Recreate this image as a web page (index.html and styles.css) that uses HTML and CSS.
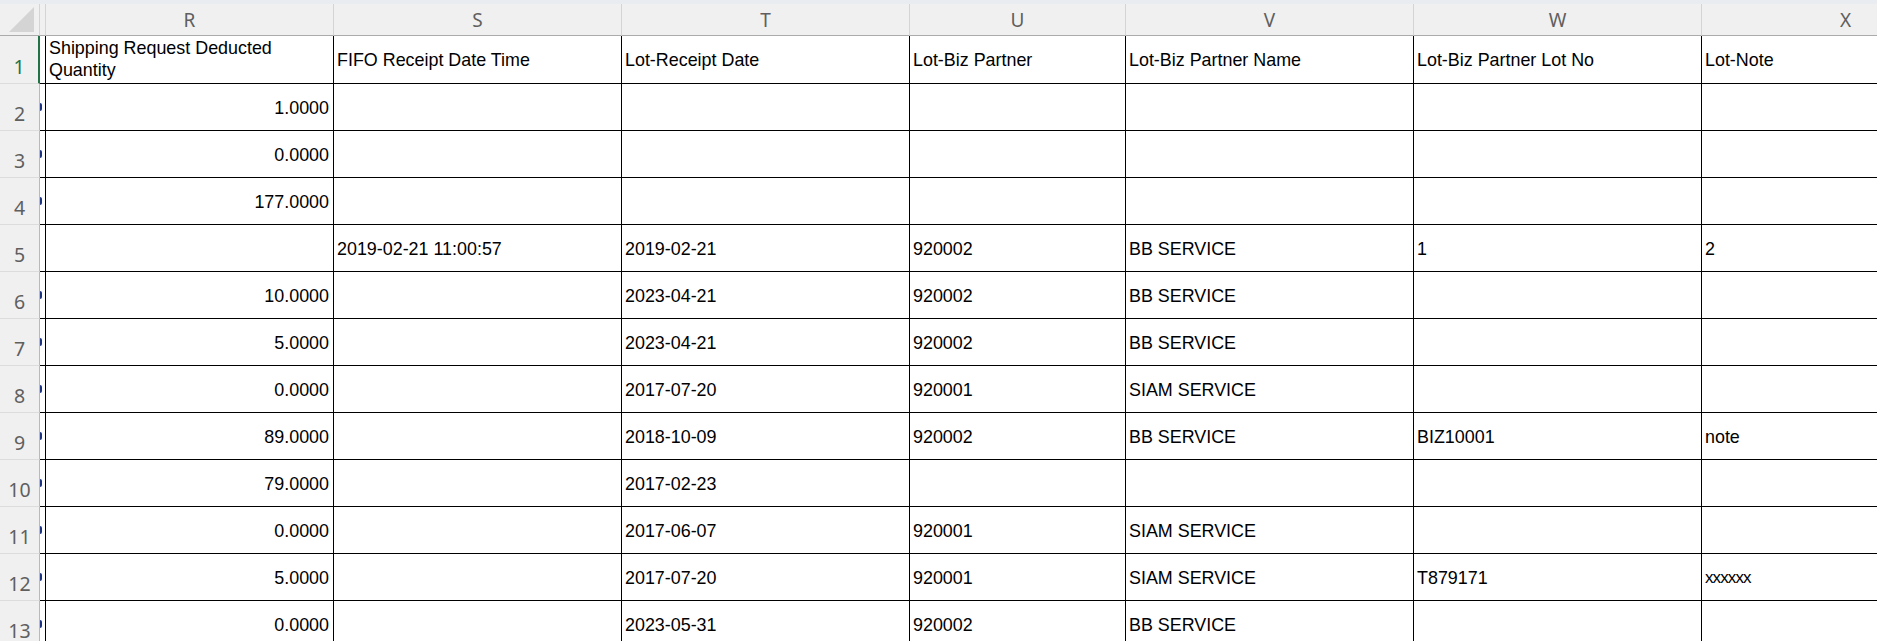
FILE: index.html
```html
<!DOCTYPE html>
<html>
<head>
<meta charset="utf-8">
<link rel="stylesheet" href="styles.css">
</head>
<body>
<div class="strip"></div>
<div class="sheet">
  <div class="corner"><span class="tri"></span></div>
  <div class="ch chq"></div>
  <div class="ch">R</div>
  <div class="ch">S</div>
  <div class="ch">T</div>
  <div class="ch">U</div>
  <div class="ch">V</div>
  <div class="ch">W</div>
  <div class="ch">X</div>

  <div class="rh active">1</div>
  <div class="q"></div>
  <div class="c wrap">Shipping Request Deducted Quantity</div>
  <div class="c">FIFO Receipt Date Time</div>
  <div class="c">Lot-Receipt Date</div>
  <div class="c">Lot-Biz Partner</div>
  <div class="c">Lot-Biz Partner Name</div>
  <div class="c">Lot-Biz Partner Lot No</div>
  <div class="c">Lot-Note</div>

  <div class="rh">2</div>
  <div class="q"><span class="mark"></span></div>
  <div class="c num">1.0000</div>
  <div class="c"></div><div class="c"></div><div class="c"></div><div class="c"></div><div class="c"></div><div class="c"></div>

  <div class="rh">3</div>
  <div class="q"><span class="mark"></span></div>
  <div class="c num">0.0000</div>
  <div class="c"></div><div class="c"></div><div class="c"></div><div class="c"></div><div class="c"></div><div class="c"></div>

  <div class="rh">4</div>
  <div class="q"><span class="mark"></span></div>
  <div class="c num">177.0000</div>
  <div class="c"></div><div class="c"></div><div class="c"></div><div class="c"></div><div class="c"></div><div class="c"></div>

  <div class="rh">5</div>
  <div class="q"></div>
  <div class="c num"></div>
  <div class="c">2019-02-21 11:00:57</div>
  <div class="c">2019-02-21</div>
  <div class="c">920002</div>
  <div class="c">BB SERVICE</div>
  <div class="c">1</div>
  <div class="c">2</div>

  <div class="rh">6</div>
  <div class="q"><span class="mark"></span></div>
  <div class="c num">10.0000</div>
  <div class="c"></div>
  <div class="c">2023-04-21</div>
  <div class="c">920002</div>
  <div class="c">BB SERVICE</div>
  <div class="c"></div><div class="c"></div>

  <div class="rh">7</div>
  <div class="q"><span class="mark"></span></div>
  <div class="c num">5.0000</div>
  <div class="c"></div>
  <div class="c">2023-04-21</div>
  <div class="c">920002</div>
  <div class="c">BB SERVICE</div>
  <div class="c"></div><div class="c"></div>

  <div class="rh">8</div>
  <div class="q"><span class="mark"></span></div>
  <div class="c num">0.0000</div>
  <div class="c"></div>
  <div class="c">2017-07-20</div>
  <div class="c">920001</div>
  <div class="c">SIAM SERVICE</div>
  <div class="c"></div><div class="c"></div>

  <div class="rh">9</div>
  <div class="q"><span class="mark"></span></div>
  <div class="c num">89.0000</div>
  <div class="c"></div>
  <div class="c">2018-10-09</div>
  <div class="c">920002</div>
  <div class="c">BB SERVICE</div>
  <div class="c">BIZ10001</div>
  <div class="c">note</div>

  <div class="rh">10</div>
  <div class="q"><span class="mark"></span></div>
  <div class="c num">79.0000</div>
  <div class="c"></div>
  <div class="c">2017-02-23</div>
  <div class="c"></div><div class="c"></div><div class="c"></div><div class="c"></div>

  <div class="rh">11</div>
  <div class="q"><span class="mark"></span></div>
  <div class="c num">0.0000</div>
  <div class="c"></div>
  <div class="c">2017-06-07</div>
  <div class="c">920001</div>
  <div class="c">SIAM SERVICE</div>
  <div class="c"></div><div class="c"></div>

  <div class="rh">12</div>
  <div class="q"><span class="mark"></span></div>
  <div class="c num">5.0000</div>
  <div class="c"></div>
  <div class="c">2017-07-20</div>
  <div class="c">920001</div>
  <div class="c">SIAM SERVICE</div>
  <div class="c">T879171</div>
  <div class="c small">xxxxxx</div>

  <div class="rh">13</div>
  <div class="q"><span class="mark"></span></div>
  <div class="c num">0.0000</div>
  <div class="c"></div>
  <div class="c">2023-05-31</div>
  <div class="c">920002</div>
  <div class="c">BB SERVICE</div>
  <div class="c"></div><div class="c"></div>
</div>
</body>
</html>
```

FILE: styles.css
```css
html, body {
  margin: 0;
  padding: 0;
  background: #ffffff;
  overflow: hidden;
  width: 1877px;
  height: 641px;
}

.strip {
  height: 4px;
  background: #e9ecf1;
}

.sheet {
  display: grid;
  grid-template-columns: 40px 5px 288px 288px 288px 216px 288px 288px 288px;
  grid-template-rows: 32px 48px repeat(12, 47px);
  width: max-content;
  font-family: "Liberation Sans", Arial, sans-serif;
  font-size: 17.9px;
  color: #000;
}

.corner {
  position: relative;
  background: #f0f0f0;
  border-bottom: 1px solid #ababab;
  border-right: 1px solid #d4d4d4;
  box-sizing: border-box;
}

.tri {
  position: absolute;
  right: 5px;
  bottom: 3px;
  width: 0;
  height: 0;
  border-style: solid;
  border-width: 0 0 25px 25px;
  border-color: transparent transparent #d4d4d4 transparent;
}

.ch {
  background: #f0f0f0;
  border-bottom: 1px solid #ababab;
  border-left: 1px solid #d4d4d4;
  box-sizing: border-box;
  display: flex;
  align-items: center;
  justify-content: center;
  font-family: "Noto Sans", "Open Sans", sans-serif;
  font-size: 19px;
  line-height: 32px;
  color: #5f5f5f;
}

.chq {
  border-left: none;
}

.rh {
  background: #f0f0f0;
  border-right: 1px solid #b9b9b9;
  border-bottom: 1px solid #dcdcdc;
  box-sizing: border-box;
  display: flex;
  align-items: flex-end;
  justify-content: center;
  padding-bottom: 6px;
  font-family: "Noto Sans", "Open Sans", sans-serif;
  font-size: 19.5px;
  line-height: 20px;
  color: #5f5f5f;
}

.rh.active {
  border-right: 2px solid #217346;
  color: #217346;
}

.q {
  border-bottom: 1px solid #000;
  box-sizing: border-box;
  display: flex;
  align-items: center;
}

.mark {
  display: block;
  width: 2px;
  height: 8px;
  background: #1c3383;
  border-radius: 0 4px 4px 0;
}

.c {
  border-left: 1px solid #000;
  border-bottom: 1px solid #000;
  box-sizing: border-box;
  display: flex;
  align-items: center;
  padding: 1px 4px 0 3px;
  white-space: nowrap;
  overflow: hidden;
  line-height: 20px;
}

.c.wrap {
  white-space: normal;
  line-height: 21.7px;
}

.c.num {
  justify-content: flex-end;
}

.c.small {
  font-size: 17px;
  letter-spacing: -0.9px;
}
```
